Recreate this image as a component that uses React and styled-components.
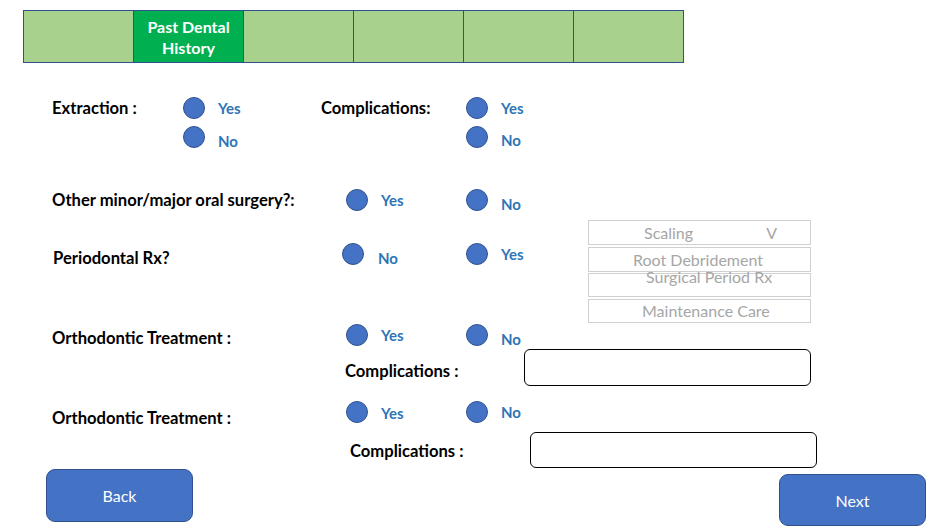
import React from "react";
import styled, { createGlobalStyle } from "styled-components";

const Global = createGlobalStyle`
  html, body { margin: 0; padding: 0; background: #fff; }
  body { font-family: Lato, "Open Sans", "Liberation Sans", sans-serif; }
  * { box-sizing: border-box; }
`;

const Page = styled.div`
  width: 946px;
  height: 530px;
  overflow: hidden;
  background: #fff;
  padding-top: 10px;
`;

const TabBar = styled.div`
  display: flex;
  margin-left: 23px;
  width: 661px;
  height: 53px;
  border: 1px solid #2f528f;
`;

const Tab = styled.div`
  flex: 1;
  background: ${(p) => (p.$active ? "#00b050" : "#a9d18e")};
  border-left: 1px solid #2f528f;
  &:first-child { border-left: none; }
  display: flex;
  align-items: center;
  justify-content: center;
  text-align: center;
  color: #fff;
  font-weight: 700;
  font-size: 16px;
  line-height: 21px;
`;

const Form = styled.div`
  padding-left: 52px;
`;

const Row = styled.div`
  display: flex;
  align-items: ${(p) => p.$align || "center"};
  height: ${(p) => p.$h || 22}px;
  margin-top: ${(p) => p.$mt || 0}px;
  padding-left: ${(p) => p.$indent || 0}px;
`;

const Label = styled.div`
  flex-shrink: 0;
  width: ${(p) => p.$w}px;
  margin-top: ${(p) => (p.$drop || 0) * 2}px;
  padding-left: ${(p) => p.$pl || 0}px;
  font-size: 16.6px;
  font-weight: 700;
  color: #000;
  line-height: 22px;
  white-space: nowrap;
`;

const Stack = styled.div`
  display: flex;
  flex-direction: column;
  gap: 7px;
  width: ${(p) => p.$w}px;
  flex-shrink: 0;
`;

const OptionWrap = styled.label`
  display: flex;
  align-items: center;
  gap: ${(p) => p.$gap || 13}px;
  height: 22px;
  width: ${(p) => (p.$w ? `${p.$w}px` : "auto")};
  flex-shrink: 0;
  cursor: pointer;
`;

const Dot = styled.span`
  width: 22px;
  height: 22px;
  border-radius: 50%;
  background: #4472c4;
  border: 1px solid #2f528f;
  flex-shrink: 0;
`;

const OptText = styled.span`
  color: #2e75b6;
  font-weight: 700;
  font-size: 15px;
  line-height: 18px;
  margin-top: ${(p) => (p.$drop || 0) * 2}px;
`;

const Option = ({ text, w, drop, gap }) => (
  <OptionWrap $w={w} $gap={gap}>
    <Dot />
    <OptText $drop={drop}>{text}</OptText>
  </OptionWrap>
);

const MenuAnchor = styled.div`
  position: relative;
  width: 223px;
  height: 22px;
  flex-shrink: 0;
`;

const Menu = styled.div`
  position: absolute;
  left: 0;
  top: -23px;
  width: 223px;
  display: flex;
  flex-direction: column;
  gap: 2px;
`;

const MenuItem = styled.div`
  height: ${(p) => p.$h || 25}px;
  margin-top: ${(p) => p.$mt || 0}px;
  border: 1px solid #d0d0d0;
  display: flex;
  align-items: ${(p) => (p.$top ? "flex-start" : "center")};
  padding-left: ${(p) => p.$pl}px;
  padding-right: 33px;
  color: #a6a6a6;
  font-size: 16px;
  line-height: 18px;
  white-space: nowrap;
`;

const MenuText = styled.span`
  margin-top: ${(p) => (p.$top ? -6 : 0)}px;
`;

const Caret = styled.span`
  margin-left: auto;
`;

const TextBox = styled.input`
  width: ${(p) => p.$w}px;
  height: ${(p) => p.$h}px;
  border: 1px solid #000;
  border-radius: 6px;
  background: #fff;
  flex-shrink: 0;
  outline: none;
  font-family: inherit;
`;

const Footer = styled.div`
  display: flex;
  justify-content: space-between;
  align-items: flex-start;
  padding: 0 20px 0 46px;
  margin-top: 1px;
`;

const NavButton = styled.button`
  width: 147px;
  height: ${(p) => p.$h}px;
  margin-top: ${(p) => p.$mt || 0}px;
  background: #4472c4;
  border: 1px solid #2f528f;
  border-radius: 9px;
  color: #fff;
  font-family: inherit;
  font-size: 16px;
  font-weight: 400;
  cursor: pointer;
`;

export default function App() {
  return (
    <Page>
      <Global />
      <TabBar>
        <Tab />
        <Tab $active>
          Past Dental
          <br />
          History
        </Tab>
        <Tab />
        <Tab />
        <Tab />
        <Tab />
      </TabBar>

      <Form>
        <Row $align="flex-start" $h={51} $mt={34}>
          <Label $w={131}>Extraction :</Label>
          <Stack $w={138}>
            <Option text="Yes" />
            <Option text="No" drop={4} />
          </Stack>
          <Label $w={145}>Complications:</Label>
          <Stack $w={120}>
            <Option text="Yes" />
            <Option text="No" drop={3} />
          </Stack>
        </Row>

        <Row $mt={41}>
          <Label $w={294}>Other minor/major oral surgery?:</Label>
          <Option text="Yes" w={120} gap={13} />
          <Option text="No" w={120} drop={4} />
        </Row>

        <Row $mt={32}>
          <Label $w={290} $drop={4} $pl={1}>Periodontal Rx?</Label>
          <Option text="No" w={124} drop={4} gap={14} />
          <Option text="Yes" w={122} />
          <MenuAnchor>
            <Menu>
              <MenuItem $pl={55}>
                <MenuText>Scaling</MenuText>
                <Caret>V</Caret>
              </MenuItem>
              <MenuItem $pl={44}>
                <MenuText>Root Debridement</MenuText>
              </MenuItem>
              <MenuItem $pl={57} $top $h={24} $mt={-1}>
                <MenuText $top>Surgical Period Rx</MenuText>
              </MenuItem>
              <MenuItem $pl={53} $h={24}>
                <MenuText>Maintenance Care</MenuText>
              </MenuItem>
            </Menu>
          </MenuAnchor>
        </Row>

        <Row $mt={59}>
          <Label $w={294} $drop={3}>Orthodontic Treatment :</Label>
          <Option text="Yes" w={120} />
          <Option text="No" w={120} drop={4} />
        </Row>

        <Row $h={37} $mt={3} $indent={293}>
          <Label $w={179} $drop={3}>Complications :</Label>
          <TextBox $w={287} $h={37} />
        </Row>

        <Row $mt={15}>
          <Label $w={294} $drop={6}>Orthodontic Treatment :</Label>
          <Option text="Yes" w={120} drop={1} />
          <Option text="No" w={120} />
        </Row>

        <Row $h={36} $mt={9} $indent={298}>
          <Label $w={180} $drop={1}>Complications :</Label>
          <TextBox $w={287} $h={36} />
        </Row>
      </Form>

      <Footer>
        <NavButton $h={53}>Back</NavButton>
        <NavButton $h={52} $mt={5}>Next</NavButton>
      </Footer>
    </Page>
  );
}
